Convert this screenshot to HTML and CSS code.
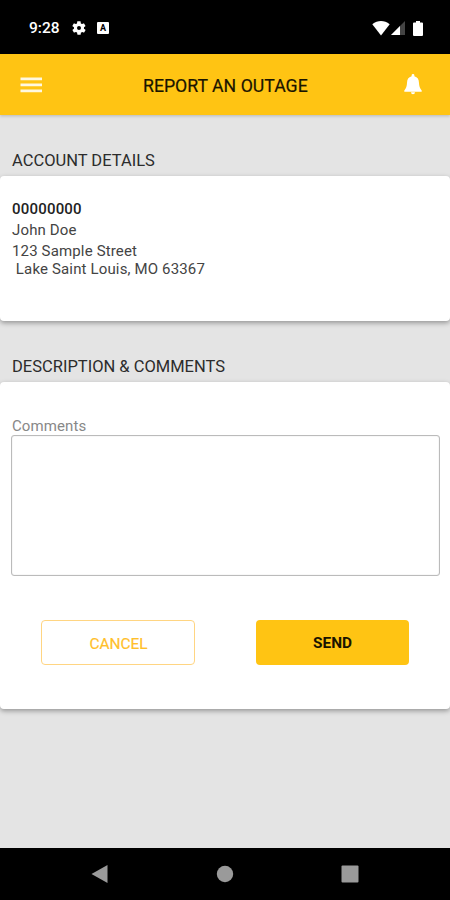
FILE: index.html
```html
<!DOCTYPE html>
<html lang="en">

<head>
    <meta charset="UTF-8">
    <meta name="viewport" content="width=device-width, initial-scale=1.0">
    <title>Report an Outage</title>
    <link rel="stylesheet" href="styles.css">
</head>

<body>
    <div class="status-bar">
        <span class="time">9:28</span>
        <svg class="gear" width="16" height="16" viewBox="0 0 24 24"><path fill="#fff" fill-rule="evenodd" d="M19.4 13c.1-.3.1-.6.1-1s0-.7-.1-1l2.1-1.600c.2-.1.200-.4.100-.600l-2-3.500c-.1-.2-.4-.3-.6-.2l-2.500 1c-.5-.4-1.100-.7-1.700-1l-.4-2.600c0-.3-.2-.5-.5-.5h-4c-.3 0-.5.200-.5.400l-.4 2.700c-.6.200-1.100.600-1.700 1l-2.500-1c-.2-.1-.5 0-.6.200l-2 3.500c-.1.200-.1.500.1.600L4.500 11c0 .3-.1.700-.1 1s0 .7.100 1l-2.100 1.600c-.2.200-.2.400-.1.600l2 3.500c.1.200.4.300.6.200l2.500-1c.5.400 1.100.7 1.700 1l.4 2.600c0 .3.200.5.500.5h4c.2 0 .5-.2.500-.4l.4-2.700c.6-.2 1.200-.6 1.700-1l2.500 1c.2.100.5 0 .6-.2l2-3.500c.1-.2.100-.5-.1-.6zM12 15a3 3 0 1 1 0-6 3 3 0 0 1 0 6z"/></svg>
        <span class="app-badge">A</span>
        <svg class="wifi" width="18" height="15" viewBox="0 0 18 15"><path fill="#fff" d="M9 14.500L.3 3.300C3 1 6 0 9 0s6 1 8.700 3.300z"/></svg>
        <svg class="signal" width="14" height="14" viewBox="0 0 14 14"><path fill="#444" d="M14 0v14H0z"/><path fill="#fff" d="M9 5v9H0z"/></svg>
        <svg class="battery" width="10" height="15" viewBox="0 0 10 15"><path fill="#fff" d="M3 0h4v1.500h2q1 0 1 1V14q0 1-1 1H1q-1 0-1-1V2.500q0-1 1-1h2z"/></svg>
    </div>

    <header class="toolbar">
        <svg class="menu" width="22" height="16" viewBox="0 0 22 16"><path fill="#fff8e0" d="M.5 .5h21.500v2.700H.5zM.5 6.500h21.500v2.700H.5zM.5 12.500h21.500v2.700H.5z"/></svg>
        <h1 class="title">REPORT AN OUTAGE</h1>
        <svg class="bell" width="18" height="21" viewBox="0 0 18 21"><path fill="#fff" d="M7.600 2.300V1.500a1.400 1.400 0 0 1 2.800 0v.8C13.600 3.100 14.900 5.500 15 9c.1 3 .8 5 2.700 7.500v1.300H.3v-1.300C2.200 14 2.900 12 3 9c.1-3.500 1.400-5.900 4.600-6.700zM7 18.300h4a2 2 0 0 1-4 0z"/></svg>
    </header>

    <main class="content">
        <h2 class="section-title">ACCOUNT DETAILS</h2>
        <div class="card account">
            <div class="account-number">00000000</div>
            <div class="account-name">John Doe</div>
            <div class="account-address">123 Sample Street<br>&nbsp;Lake Saint Louis, MO 63367</div>
        </div>

        <h2 class="section-title">DESCRIPTION &amp; COMMENTS</h2>
        <div class="card comments">
            <label class="comments-label" for="comments">Comments</label>
            <textarea class="comments-box" id="comments"></textarea>
            <div class="buttons">
                <button class="btn cancel">CANCEL</button>
                <button class="btn send">SEND</button>
            </div>
        </div>
    </main>

    <nav class="nav-bar">
        <svg width="18" height="20" viewBox="0 0 18 20"><path fill="#9a9a9a" d="M.5 10L16.500 1v18z"/></svg>
        <svg width="18" height="18" viewBox="0 0 18 18"><circle cx="9" cy="9" r="8.200" fill="#9a9a9a"/></svg>
        <svg width="18" height="18" viewBox="0 0 18 18"><rect x=".5" y=".5" width="17" height="17" rx="1" fill="#9a9a9a"/></svg>
    </nav>
</body>

</html>
```
FILE: styles.css
```css
* {
    box-sizing: border-box;
}

body {
    margin: 0;
    height: 900px;
    display: flex;
    flex-direction: column;
    overflow: hidden;
    background-color: #e4e4e4;
    color: #222;
    font-family: Roboto, "Liberation Sans", sans-serif;
}

svg {
    display: block;
    flex-shrink: 0;
}

.status-bar {
    height: 54px;
    padding: 2px 27px 0 29px;
    display: flex;
    align-items: center;
    background-color: #000;
    color: #fff;
}

.time {
    width: 31px;
    font-size: 15.5px;
    font-weight: 500;
    white-space: nowrap;
}

.gear {
    margin-left: 11px;
}

.app-badge {
    width: 12px;
    height: 12px;
    margin-left: 10px;
    border-radius: 1px;
    background-color: #fff;
    color: #000;
    font-size: 9px;
    font-weight: 700;
    line-height: 12px;
    text-align: center;
}

.wifi {
    margin-left: auto;
}

.signal {
    margin-left: 1px;
}

.battery {
    margin-left: 8px;
}

.toolbar {
    height: 61px;
    padding: 0 28px 0 20px;
    display: flex;
    align-items: center;
    background-color: #ffc413;
    box-shadow: 0 1px 3px rgba(0, 0, 0, 0.2);
}

.title {
    margin: 2px 0 0 101px;
    color: #1a1400;
    font-size: 17.7px;
    font-weight: 400;
    -webkit-text-stroke: 0.2px #1a1400;
}

.bell {
    margin-left: auto;
}

.content {
    flex: 1;
}

.section-title {
    height: 61px;
    margin: 0;
    padding: 36px 12px 0;
    color: #2c2c2c;
    font-size: 16.5px;
    font-weight: 400;
    line-height: 20px;
}

.card {
    background-color: #fff;
    border-radius: 4px;
    box-shadow: 0 2px 5px rgba(0, 0, 0, 0.35);
}

.account {
    height: 145px;
    padding: 23px 12px 0;
    color: #444;
    font-size: 15px;
    font-weight: 400;
    line-height: 18px;
    letter-spacing: 0.15px;
}

.account-number {
    height: 21px;
    color: #222;
    font-weight: 500;
    line-height: 20px;
    letter-spacing: 0.2px;
}

.account-name {
    height: 21px;
    line-height: 20px;
}

.account-address {
    padding-top: 1px;
}

.comments {
    height: 327px;
    padding: 35px 11px 0;
}

.comments-label {
    display: block;
    height: 18px;
    padding-left: 1px;
    color: #888;
    font-size: 15px;
    line-height: 18px;
    letter-spacing: 0.1px;
}

.comments-box {
    display: block;
    width: 429px;
    height: 141px;
    border: 1px solid #bbb;
    border-radius: 3px;
    box-shadow: inset 0 0 1px #bbb;
    resize: none;
    outline: none;
}

.buttons {
    padding: 44px 30px 0;
    display: flex;
    justify-content: space-between;
}

.btn {
    width: 153px;
    height: 45px;
    padding: 1px 0 0;
    border: none;
    border-radius: 4px;
    font-family: inherit;
    font-size: 15.4px;
}

.cancel {
    width: 154px;
    padding: 2px 0 0 1px;
    border: 1px solid #ffd582;
    background-color: #fff;
    color: #ffc02a;
    font-weight: 400;
    -webkit-text-stroke: 0.2px #ffc02a;
}

.send {
    background-color: #ffc413;
    color: #1a1400;
    font-weight: 700;
}

.nav-bar {
    height: 52px;
    padding: 0 91px;
    display: flex;
    align-items: center;
    justify-content: space-between;
    background-color: #000;
}
```
